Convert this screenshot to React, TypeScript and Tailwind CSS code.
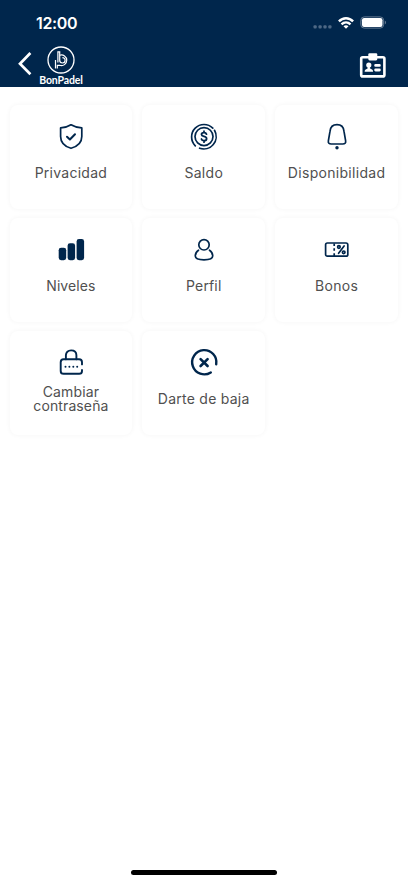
import type { ReactNode } from 'react';

const Icon = ({ children }: { children: ReactNode }) => (
  <svg
    className="h-[30px] w-[30px] shrink-0 text-[#00264c]"
    viewBox="0 0 30 30"
    fill="none"
    stroke="currentColor"
    strokeWidth="1.7"
    strokeLinecap="round"
    strokeLinejoin="round"
  >
    {children}
  </svg>
);

const ShieldIcon = () => (
  <Icon>
    <path d="M15 2.8C11.8 4.8 8.4 5.8 4.6 5.9V14.5C4.6 20.2 8.3 24.4 15 26.3C21.7 24.4 25.8 20.2 25.8 14.5V5.9C22 5.8 18.4 4.8 15 2.8Z" />
    <path d="M11 14.7L13.9 17.5L19 12.2" strokeWidth="2" />
  </Icon>
);

const CoinIcon = () => (
  <Icon>
    <path d="M6.3 23.8A12.4 12.4 0 0 1 23.8 6.1M25.5 8.3A12.4 12.4 0 0 1 10.6 26.2" />
    <circle cx="15" cy="14.6" r="9" />
    <path d="M17.5 12.2C17.2 11.1 16.3 10.6 15 10.6C13.4 10.6 12.5 11.4 12.5 12.5C12.5 15.2 17.6 13.7 17.6 16.7C17.6 17.9 16.6 18.7 15 18.7C13.6 18.7 12.7 18.1 12.4 17M15 9.2V10.6M15 18.7V20.2" strokeWidth="1.8" />
  </Icon>
);

const BellIcon = () => (
  <Icon>
    <path d="M15 2.7C10.7 2.7 8.4 5.2 8 9.4L6.4 18.6C5.9 21.2 7.2 22 9.2 22H20.8C22.8 22 24.1 21.2 23.6 18.6L22 9.4C21.6 5.2 19.3 2.7 15 2.7Z" />
    <circle cx="15" cy="25.7" r="1.7" fill="currentColor" stroke="none" />
  </Icon>
);

const LevelsIcon = () => (
  <Icon>
    <g fill="currentColor" stroke="none">
      <rect x="2.7" y="12.8" width="7.5" height="12.4" rx="2.4" />
      <rect x="11.6" y="8.3" width="7.5" height="16.9" rx="2.4" />
      <rect x="20.6" y="4" width="7.5" height="21.2" rx="2.4" />
    </g>
  </Icon>
);

const ProfileIcon = () => (
  <Icon>
    <circle cx="15" cy="9.8" r="5.2" />
    <path d="M9.5 15.2C7.2 16.7 6.3 19 6.3 21C6.3 23.7 9.7 24.8 15 24.8C20.3 24.8 23.7 23.7 23.7 21C23.7 19 22.8 16.7 20.5 15.2" />
  </Icon>
);

const VoucherIcon = () => (
  <Icon>
    <rect x="3.6" y="8" width="22.2" height="13.2" rx="1.8" />
    <path d="M12.2 8.5V11M12.2 13.3V15.8M12.2 18.2V21" strokeLinecap="butt" />
    <path d="M22.1 11L16.6 18.3" />
    <circle cx="16.9" cy="12" r="1.3" />
    <circle cx="21.7" cy="17.3" r="1.3" />
  </Icon>
);

const LockIcon = () => (
  <Icon>
    <g strokeWidth="1.9">
      <path d="M9.9 11.2V7.3C9.9 4.2 12 2.4 15.1 2.4C18.3 2.4 20.4 4.2 20.4 7.3V11.2" />
      <path d="M26 16.4V14.2C26 12.4 24.9 11.3 23.1 11.3H7.6C5.8 11.3 4.7 12.4 4.7 14.2V22.9C4.7 24.7 5.8 25.8 7.6 25.8H23.1C24.9 25.8 26 24.7 26 22.9V22" />
    </g>
    <g fill="currentColor" stroke="none">
      <circle cx="9.5" cy="18.8" r="1" />
      <circle cx="13.4" cy="18.8" r="1" />
      <circle cx="17.3" cy="18.8" r="1" />
      <circle cx="21.2" cy="18.8" r="1" />
    </g>
  </Icon>
);

const CancelIcon = () => (
  <Icon>
    <path d="M27.2 16.2A12.1 12.1 0 1 0 21.8 24.4" strokeWidth="2.4" />
    <path d="M11.6 11.1L18.6 18M18.6 11.1L11.6 18" strokeWidth="2.6" />
  </Icon>
);

const items = [
  { label: 'Privacidad', icon: <ShieldIcon />, text: 'tracking-[0.26px]' },
  { label: 'Saldo', icon: <CoinIcon />, text: 'tracking-[0.3px]' },
  { label: 'Disponibilidad', icon: <BellIcon />, text: 'tracking-[0.3px]' },
  { label: 'Niveles', icon: <LevelsIcon />, text: 'tracking-[0.1px]' },
  { label: 'Perfil', icon: <ProfileIcon />, text: 'tracking-[0.15px]' },
  { label: 'Bonos', icon: <VoucherIcon />, text: 'tracking-[0.3px]' },
  { label: 'Cambiar contraseña', icon: <LockIcon />, text: 'w-20 tracking-[0.12px]' },
  { label: 'Darte de baja', icon: <CancelIcon />, text: 'tracking-[0.25px]' },
];

const StatusBar = () => (
  <div className="flex h-[45px] items-center justify-between pl-9 pr-[21px]">
    <span className="text-[16px] font-semibold leading-none tracking-[-0.35px]">12:00</span>
    <div className="flex items-center">
      <svg className="mt-2 h-1 w-5" viewBox="0 0 20 4" fill="#4d6885">
        <rect x="0.5" y="0.2" width="3.2" height="3.2" rx="1" />
        <rect x="5.5" y="0.2" width="3.2" height="3.2" rx="1" />
        <rect x="10.4" y="0.2" width="3.2" height="3.2" rx="1" />
        <rect x="15.3" y="0.2" width="3.2" height="3.2" rx="1" />
      </svg>
      <svg className="ml-[5px] h-3 w-4" viewBox="0 0 16 12" fill="none" stroke="white" strokeWidth="2.4">
        <path d="M0.9 4.4C5 0.2 11 0.2 15.1 4.4" />
        <path d="M3.5 7.3C6.1 4.8 9.9 4.8 12.5 7.3" />
        <path d="M8 11.8L5.5 9.3C7 8 9 8 10.5 9.3Z" fill="white" stroke="none" />
      </svg>
      <svg className="ml-1.5 h-[13px] w-[27px]" viewBox="0 0 27 13">
        <rect x="0.8" y="0.9" width="22.8" height="11.2" rx="3.4" fill="none" stroke="#667c94" />
        <rect x="1.9" y="2" width="20.6" height="9" rx="2.2" fill="white" />
        <path d="M24.8 4.5C26.4 5.1 26.4 7.9 24.8 8.5Z" fill="#667c94" />
      </svg>
    </div>
  </div>
);

const Header = () => (
  <div className="flex h-[42px] items-start justify-between pl-[18px] pr-[21px]">
    <div className="flex items-start">
      <svg className="mt-[6.5px] h-6 w-[14px]" viewBox="0 0 14 24" fill="none" stroke="white" strokeWidth="2.7">
        <path d="M12.4 1L2 11.8L12.4 22.3" />
      </svg>
      <div className="ml-[7px] flex w-[43px] flex-col items-center">
        <svg className="mt-px h-[28px] w-[28px]" viewBox="0 0 28 28" fill="none" stroke="white">
          <circle cx="14" cy="14" r="13" strokeWidth="1.3" />
          <g strokeWidth="1.2">
            <path d="M10.9 16.5V5.9H12.7V14.3A2.7 2.7 0 1 0 15.4 11.6" />
            <path d="M12.7 9.3A5.3 5.3 0 1 1 12.7 19.3H10.3V22.5" />
            <path d="M8.5 14V22.5" />
          </g>
        </svg>
        <span className="ml-px mt-px text-[10.5px] font-bold leading-[10px] tracking-[-0.1px] font-['Lato','Inter',sans-serif]">BonPadel</span>
      </div>
    </div>
    <svg className="mt-2 h-[26px] w-[28px]" viewBox="0 0 28 26">
      <rect x="2.2" y="4.2" width="23.2" height="19.2" rx="1.5" fill="none" stroke="white" strokeWidth="2.6" />
      <rect x="9.3" y="0.2" width="9" height="7.2" rx="1.3" fill="white" />
      <circle cx="9.8" cy="12" r="2.6" fill="white" />
      <path d="M5.7 18.8V17.7C6.2 16.2 8.2 15.7 8.7 15.2V13.5H10.9V15.2C11.6 15.7 13.5 16.2 14 17.7V18.8Z" fill="white" />
      <path d="M16.6 12.4H20.4M16.6 17H20.4" stroke="white" strokeWidth="2.8" strokeLinecap="round" />
    </svg>
  </div>
);

export default function App() {
  return (
    <div className="flex h-[883px] w-[408px] flex-col overflow-hidden bg-white font-['Inter',sans-serif]">
      <header className="h-[87px] shrink-0 bg-[#00264c] text-white">
        <StatusBar />
        <Header />
      </header>
      <main className="grid grid-cols-3 gap-x-[10px] gap-y-[9px] pl-[9.5px] pr-[10px] pt-[18px]">
        {items.map(({ label, icon, text }) => (
          <button
            key={label}
            className="flex h-[104px] flex-col items-center rounded-lg bg-white pt-[17px] shadow-[0_0_4px_1px_rgba(0,0,0,0.03)]"
          >
            {icon}
            <span className="flex h-[41px] items-center">
              <span className={`text-center text-[14px] leading-[14px] text-[#505050] ${text}`}>{label}</span>
            </span>
          </button>
        ))}
      </main>
      <footer className="mt-auto flex justify-center pb-2">
        <div className="h-[5px] w-[146px] rounded-full bg-black" />
      </footer>
    </div>
  );
}
